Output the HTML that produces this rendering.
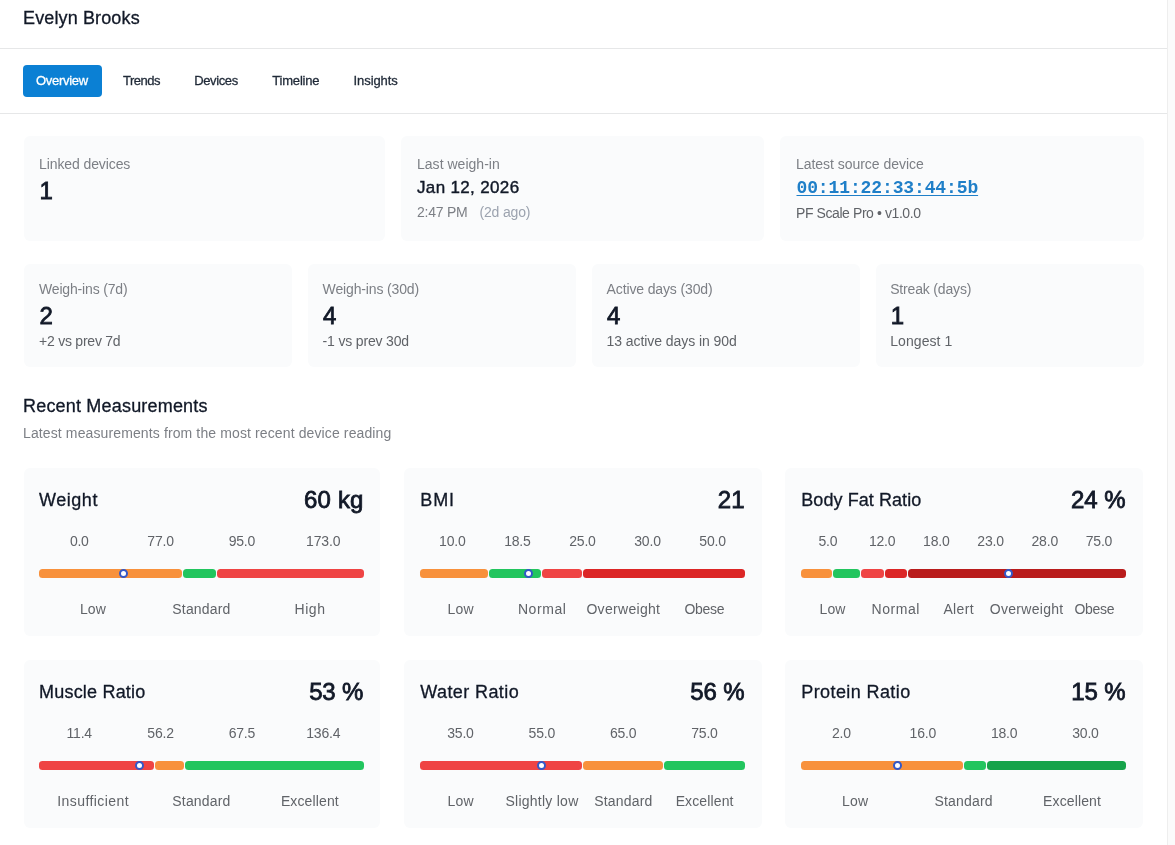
<!DOCTYPE html>
<html><head><meta charset="utf-8"><style>
html,body{margin:0;padding:0;background:#fff;}
body{width:1175px;height:845px;position:relative;overflow:hidden;font-family:"Liberation Sans", sans-serif;}
.t{position:absolute;line-height:1;white-space:nowrap;}
body>div.wrap{position:absolute;left:0;top:0;width:1175px;height:845px;will-change:transform;}
.r{position:absolute;}
</style></head><body>
<div class="wrap">
<div class="r" style="left:1167.00px;top:0.00px;width:1.00px;height:845.00px;background:#eeeeee;"></div>
<div class="r" style="left:1168.00px;top:0.00px;width:7.00px;height:845.00px;background:#fbfbfb;"></div>
<div class="t" style="top:8.66px;font-size:18px;color:#111827;font-weight:400;font-family:'Liberation Sans', sans-serif;letter-spacing:0.133px;-webkit-text-stroke:0.3px #111827;left:23.00px;">Evelyn Brooks</div>
<div class="r" style="left:0.00px;top:48.00px;width:1167.00px;height:1.00px;background:#e6e7e8;"></div>
<div class="r" style="left:23.00px;top:65.00px;width:79.00px;height:32.00px;background:#0b80d4;border-radius:4px;"></div>
<div class="t" style="top:73.50px;font-size:13px;color:#ffffff;font-weight:400;font-family:'Liberation Sans', sans-serif;letter-spacing:-0.286px;-webkit-text-stroke:0.3px #ffffff;left:-138.14px;width:400px;text-align:center;">Overview</div>
<div class="t" style="top:73.50px;font-size:13px;color:#1f2937;font-weight:400;font-family:'Liberation Sans', sans-serif;letter-spacing:-0.52px;-webkit-text-stroke:0.3px #1f2937;left:-58.46px;width:400px;text-align:center;">Trends</div>
<div class="t" style="top:73.50px;font-size:13px;color:#1f2937;font-weight:400;font-family:'Liberation Sans', sans-serif;letter-spacing:-0.383px;-webkit-text-stroke:0.3px #1f2937;left:16.01px;width:400px;text-align:center;">Devices</div>
<div class="t" style="top:73.50px;font-size:13px;color:#1f2937;font-weight:400;font-family:'Liberation Sans', sans-serif;letter-spacing:-0.171px;-webkit-text-stroke:0.3px #1f2937;left:95.81px;width:400px;text-align:center;">Timeline</div>
<div class="t" style="top:73.50px;font-size:13px;color:#1f2937;font-weight:400;font-family:'Liberation Sans', sans-serif;letter-spacing:-0.086px;-webkit-text-stroke:0.3px #1f2937;left:175.66px;width:400px;text-align:center;">Insights</div>
<div class="r" style="left:0.00px;top:113.00px;width:1167.00px;height:1.00px;background:#e6e7e8;"></div>
<div class="r" style="left:24.00px;top:136.00px;width:361.00px;height:105.00px;background:#fafbfc;border-radius:6px;"></div>
<div class="r" style="left:401.00px;top:136.00px;width:363.00px;height:105.00px;background:#fafbfc;border-radius:6px;"></div>
<div class="r" style="left:780.00px;top:136.00px;width:364.00px;height:105.00px;background:#fafbfc;border-radius:6px;"></div>
<div class="t" style="top:157.05px;font-size:14px;color:#7c7f85;font-weight:400;font-family:'Liberation Sans', sans-serif;letter-spacing:-0.1px;left:39.00px;">Linked devices</div>
<div class="t" style="top:178.68px;font-size:24px;color:#111827;font-weight:400;font-family:'Liberation Sans', sans-serif;-webkit-text-stroke:0.8px #111827;left:39.50px;">1</div>
<div class="t" style="top:156.75px;font-size:14px;color:#7c7f85;font-weight:400;font-family:'Liberation Sans', sans-serif;letter-spacing:0.025px;left:417.00px;">Last weigh-in</div>
<div class="t" style="top:179.21px;font-size:17px;color:#111827;font-weight:400;font-family:'Liberation Sans', sans-serif;letter-spacing:0.345px;-webkit-text-stroke:0.4px #111827;left:417.00px;">Jan 12, 2026</div>
<div class="t" style="top:205.05px;font-size:14px;color:#7c7f85;font-weight:400;font-family:'Liberation Sans', sans-serif;letter-spacing:-0.233px;left:417.00px;">2:47 PM</div>
<div class="t" style="top:205.05px;font-size:14px;color:#9ca3af;font-weight:400;font-family:'Liberation Sans', sans-serif;letter-spacing:-0.171px;left:479.50px;">(2d ago)</div>
<div class="t" style="top:156.85px;font-size:14px;color:#7c7f85;font-weight:400;font-family:'Liberation Sans', sans-serif;letter-spacing:-0.037px;left:796.00px;">Latest source device</div>
<div class="t" style="top:179.36px;font-size:18px;color:#1f7fc8;font-weight:700;font-family:'Liberation Mono', monospace;letter-spacing:-0.12px;left:796.50px;text-decoration:underline;text-underline-offset:2px;">00:11:22:33:44:5b</div>
<div class="t" style="top:206.15px;font-size:14px;color:#606368;font-weight:400;font-family:'Liberation Sans', sans-serif;letter-spacing:-0.415px;left:796.00px;">PF Scale Pro • v1.0.0</div>
<div class="r" style="left:24.00px;top:264.00px;width:268.00px;height:103.00px;background:#fafbfc;border-radius:6px;"></div>
<div class="t" style="top:282.05px;font-size:14px;color:#7c7f85;font-weight:400;font-family:'Liberation Sans', sans-serif;letter-spacing:-0.169px;left:39.00px;">Weigh-ins (7d)</div>
<div class="t" style="top:304.28px;font-size:24px;color:#111827;font-weight:400;font-family:'Liberation Sans', sans-serif;-webkit-text-stroke:0.8px #111827;left:39.50px;">2</div>
<div class="t" style="top:333.65px;font-size:14px;color:#606368;font-weight:400;font-family:'Liberation Sans', sans-serif;letter-spacing:-0.233px;left:39.00px;">+2 vs prev 7d</div>
<div class="r" style="left:308.00px;top:264.00px;width:268.00px;height:103.00px;background:#fafbfc;border-radius:6px;"></div>
<div class="t" style="top:282.05px;font-size:14px;color:#7c7f85;font-weight:400;font-family:'Liberation Sans', sans-serif;letter-spacing:-0.143px;left:322.60px;">Weigh-ins (30d)</div>
<div class="t" style="top:304.28px;font-size:24px;color:#111827;font-weight:400;font-family:'Liberation Sans', sans-serif;-webkit-text-stroke:0.8px #111827;left:323.10px;">4</div>
<div class="t" style="top:333.65px;font-size:14px;color:#606368;font-weight:400;font-family:'Liberation Sans', sans-serif;letter-spacing:-0.169px;left:322.60px;">-1 vs prev 30d</div>
<div class="r" style="left:592.00px;top:264.00px;width:268.00px;height:103.00px;background:#fafbfc;border-radius:6px;"></div>
<div class="t" style="top:282.05px;font-size:14px;color:#7c7f85;font-weight:400;font-family:'Liberation Sans', sans-serif;letter-spacing:-0.131px;left:606.60px;">Active days (30d)</div>
<div class="t" style="top:304.28px;font-size:24px;color:#111827;font-weight:400;font-family:'Liberation Sans', sans-serif;-webkit-text-stroke:0.8px #111827;left:607.10px;">4</div>
<div class="t" style="top:333.65px;font-size:14px;color:#606368;font-weight:400;font-family:'Liberation Sans', sans-serif;letter-spacing:-0.07px;left:606.60px;">13 active days in 90d</div>
<div class="r" style="left:876.00px;top:264.00px;width:268.00px;height:103.00px;background:#fafbfc;border-radius:6px;"></div>
<div class="t" style="top:282.05px;font-size:14px;color:#7c7f85;font-weight:400;font-family:'Liberation Sans', sans-serif;letter-spacing:-0.167px;left:890.20px;">Streak (days)</div>
<div class="t" style="top:304.28px;font-size:24px;color:#111827;font-weight:400;font-family:'Liberation Sans', sans-serif;-webkit-text-stroke:0.8px #111827;left:890.70px;">1</div>
<div class="t" style="top:333.65px;font-size:14px;color:#606368;font-weight:400;font-family:'Liberation Sans', sans-serif;letter-spacing:0.075px;left:890.20px;">Longest 1</div>
<div class="t" style="top:396.76px;font-size:18px;color:#111827;font-weight:400;font-family:'Liberation Sans', sans-serif;letter-spacing:0.189px;-webkit-text-stroke:0.3px #111827;left:23.00px;">Recent Measurements</div>
<div class="t" style="top:426.15px;font-size:14px;color:#7c7f85;font-weight:400;font-family:'Liberation Sans', sans-serif;letter-spacing:0.119px;left:23.00px;">Latest measurements from the most recent device reading</div>
<div class="r" style="left:24.00px;top:468.00px;width:356.00px;height:168.00px;background:#fafbfc;border-radius:6px;"></div>
<div class="t" style="top:491.26px;font-size:18px;color:#111827;font-weight:400;font-family:'Liberation Sans', sans-serif;letter-spacing:0.52px;-webkit-text-stroke:0.3px #111827;left:39.10px;">Weight</div>
<div class="t" style="top:487.58px;font-size:24px;color:#111827;font-weight:400;font-family:'Liberation Sans', sans-serif;letter-spacing:0.15px;-webkit-text-stroke:0.8px #111827;right:811.45px;">60 kg</div>
<div class="t" style="top:533.95px;font-size:14px;color:#606368;font-weight:400;font-family:'Liberation Sans', sans-serif;letter-spacing:-0.35px;left:-120.81px;width:400px;text-align:center;">0.0</div>
<div class="t" style="top:533.95px;font-size:14px;color:#606368;font-weight:400;font-family:'Liberation Sans', sans-serif;letter-spacing:-0.2px;left:-39.41px;width:400px;text-align:center;">77.0</div>
<div class="t" style="top:533.95px;font-size:14px;color:#606368;font-weight:400;font-family:'Liberation Sans', sans-serif;letter-spacing:-0.2px;left:41.91px;width:400px;text-align:center;">95.0</div>
<div class="t" style="top:533.95px;font-size:14px;color:#606368;font-weight:400;font-family:'Liberation Sans', sans-serif;letter-spacing:-0.1px;left:123.29px;width:400px;text-align:center;">173.0</div>
<div class="r" style="left:38.70px;top:569.20px;width:143.79px;height:8.50px;background:#f8913c;border-radius:3.5px;"></div>
<div class="r" style="left:183.49px;top:569.20px;width:32.85px;height:8.50px;background:#22c55e;border-radius:3.5px;"></div>
<div class="r" style="left:217.33px;top:569.20px;width:146.67px;height:8.50px;background:#ef4444;border-radius:3.5px;"></div>
<div class="r" style="left:118.90px;top:569.00px;width:5px;height:5px;border:2px solid #3358c8;border-radius:50%;background:#fff;"></div>
<div class="t" style="top:601.85px;font-size:14px;color:#606368;font-weight:400;font-family:'Liberation Sans', sans-serif;letter-spacing:0.15px;left:-107.01px;width:400px;text-align:center;">Low</div>
<div class="t" style="top:601.85px;font-size:14px;color:#606368;font-weight:400;font-family:'Liberation Sans', sans-serif;letter-spacing:0.186px;left:1.44px;width:400px;text-align:center;">Standard</div>
<div class="t" style="top:601.85px;font-size:14px;color:#606368;font-weight:400;font-family:'Liberation Sans', sans-serif;letter-spacing:0.533px;left:110.05px;width:400px;text-align:center;">High</div>
<div class="r" style="left:404.00px;top:468.00px;width:358.00px;height:168.00px;background:#fafbfc;border-radius:6px;"></div>
<div class="t" style="top:491.26px;font-size:18px;color:#111827;font-weight:400;font-family:'Liberation Sans', sans-serif;letter-spacing:0.85px;-webkit-text-stroke:0.3px #111827;left:420.30px;">BMI</div>
<div class="t" style="top:487.58px;font-size:24px;color:#111827;font-weight:400;font-family:'Liberation Sans', sans-serif;letter-spacing:0.2px;-webkit-text-stroke:0.8px #111827;right:430.20px;">21</div>
<div class="t" style="top:533.95px;font-size:14px;color:#606368;font-weight:400;font-family:'Liberation Sans', sans-serif;letter-spacing:-0.2px;left:252.33px;width:400px;text-align:center;">10.0</div>
<div class="t" style="top:533.95px;font-size:14px;color:#606368;font-weight:400;font-family:'Liberation Sans', sans-serif;letter-spacing:-0.2px;left:317.39px;width:400px;text-align:center;">18.5</div>
<div class="t" style="top:533.95px;font-size:14px;color:#606368;font-weight:400;font-family:'Liberation Sans', sans-serif;letter-spacing:-0.2px;left:382.45px;width:400px;text-align:center;">25.0</div>
<div class="t" style="top:533.95px;font-size:14px;color:#606368;font-weight:400;font-family:'Liberation Sans', sans-serif;letter-spacing:-0.2px;left:447.51px;width:400px;text-align:center;">30.0</div>
<div class="t" style="top:533.95px;font-size:14px;color:#606368;font-weight:400;font-family:'Liberation Sans', sans-serif;letter-spacing:-0.2px;left:512.57px;width:400px;text-align:center;">50.0</div>
<div class="r" style="left:419.90px;top:569.20px;width:68.13px;height:8.50px;background:#f8913c;border-radius:3.5px;"></div>
<div class="r" style="left:489.03px;top:569.20px;width:51.86px;height:8.50px;background:#22c55e;border-radius:3.5px;"></div>
<div class="r" style="left:541.89px;top:569.20px;width:39.66px;height:8.50px;background:#ef4444;border-radius:3.5px;"></div>
<div class="r" style="left:582.55px;top:569.20px;width:162.65px;height:8.50px;background:#dc2626;border-radius:3.5px;"></div>
<div class="r" style="left:524.00px;top:569.00px;width:5px;height:5px;border:2px solid #3358c8;border-radius:50%;background:#fff;"></div>
<div class="t" style="top:601.85px;font-size:14px;color:#606368;font-weight:400;font-family:'Liberation Sans', sans-serif;letter-spacing:0.15px;left:260.64px;width:400px;text-align:center;">Low</div>
<div class="t" style="top:601.85px;font-size:14px;color:#606368;font-weight:400;font-family:'Liberation Sans', sans-serif;letter-spacing:0.57px;left:342.17px;width:400px;text-align:center;">Normal</div>
<div class="t" style="top:601.85px;font-size:14px;color:#606368;font-weight:400;font-family:'Liberation Sans', sans-serif;letter-spacing:0.306px;left:423.37px;width:400px;text-align:center;">Overweight</div>
<div class="t" style="top:601.85px;font-size:14px;color:#606368;font-weight:400;font-family:'Liberation Sans', sans-serif;letter-spacing:-0.325px;left:504.37px;width:400px;text-align:center;">Obese</div>
<div class="r" style="left:785.00px;top:468.00px;width:358.00px;height:168.00px;background:#fafbfc;border-radius:6px;"></div>
<div class="t" style="top:491.26px;font-size:18px;color:#111827;font-weight:400;font-family:'Liberation Sans', sans-serif;letter-spacing:0.069px;-webkit-text-stroke:0.3px #111827;left:801.30px;">Body Fat Ratio</div>
<div class="t" style="top:487.58px;font-size:24px;color:#111827;font-weight:400;font-family:'Liberation Sans', sans-serif;-webkit-text-stroke:0.8px #111827;right:49.40px;">24 %</div>
<div class="t" style="top:533.95px;font-size:14px;color:#606368;font-weight:400;font-family:'Liberation Sans', sans-serif;letter-spacing:-0.2px;left:627.91px;width:400px;text-align:center;">5.0</div>
<div class="t" style="top:533.95px;font-size:14px;color:#606368;font-weight:400;font-family:'Liberation Sans', sans-serif;letter-spacing:-0.2px;left:682.12px;width:400px;text-align:center;">12.0</div>
<div class="t" style="top:533.95px;font-size:14px;color:#606368;font-weight:400;font-family:'Liberation Sans', sans-serif;letter-spacing:-0.2px;left:736.34px;width:400px;text-align:center;">18.0</div>
<div class="t" style="top:533.95px;font-size:14px;color:#606368;font-weight:400;font-family:'Liberation Sans', sans-serif;letter-spacing:-0.2px;left:790.56px;width:400px;text-align:center;">23.0</div>
<div class="t" style="top:533.95px;font-size:14px;color:#606368;font-weight:400;font-family:'Liberation Sans', sans-serif;letter-spacing:-0.2px;left:844.78px;width:400px;text-align:center;">28.0</div>
<div class="t" style="top:533.95px;font-size:14px;color:#606368;font-weight:400;font-family:'Liberation Sans', sans-serif;letter-spacing:-0.2px;left:898.99px;width:400px;text-align:center;">75.0</div>
<div class="r" style="left:800.90px;top:569.20px;width:31.53px;height:8.50px;background:#f8913c;border-radius:3.5px;"></div>
<div class="r" style="left:833.43px;top:569.20px;width:26.88px;height:8.50px;background:#22c55e;border-radius:3.5px;"></div>
<div class="r" style="left:861.31px;top:569.20px;width:22.24px;height:8.50px;background:#ef4444;border-radius:3.5px;"></div>
<div class="r" style="left:884.55px;top:569.20px;width:22.24px;height:8.50px;background:#dc2626;border-radius:3.5px;"></div>
<div class="r" style="left:907.78px;top:569.20px;width:218.42px;height:8.50px;background:#b91c1c;border-radius:3.5px;"></div>
<div class="r" style="left:1004.10px;top:569.00px;width:5px;height:5px;border:2px solid #3358c8;border-radius:50%;background:#fff;"></div>
<div class="t" style="top:601.85px;font-size:14px;color:#606368;font-weight:400;font-family:'Liberation Sans', sans-serif;letter-spacing:0.15px;left:632.58px;width:400px;text-align:center;">Low</div>
<div class="t" style="top:601.85px;font-size:14px;color:#606368;font-weight:400;font-family:'Liberation Sans', sans-serif;letter-spacing:0.57px;left:695.78px;width:400px;text-align:center;">Normal</div>
<div class="t" style="top:601.85px;font-size:14px;color:#606368;font-weight:400;font-family:'Liberation Sans', sans-serif;letter-spacing:0.325px;left:758.66px;width:400px;text-align:center;">Alert</div>
<div class="t" style="top:601.85px;font-size:14px;color:#606368;font-weight:400;font-family:'Liberation Sans', sans-serif;letter-spacing:0.306px;left:826.65px;width:400px;text-align:center;">Overweight</div>
<div class="t" style="top:601.85px;font-size:14px;color:#606368;font-weight:400;font-family:'Liberation Sans', sans-serif;letter-spacing:-0.325px;left:894.34px;width:400px;text-align:center;">Obese</div>
<div class="r" style="left:24.00px;top:660.00px;width:356.00px;height:168.00px;background:#fafbfc;border-radius:6px;"></div>
<div class="t" style="top:683.26px;font-size:18px;color:#111827;font-weight:400;font-family:'Liberation Sans', sans-serif;letter-spacing:0.191px;-webkit-text-stroke:0.3px #111827;left:39.10px;">Muscle Ratio</div>
<div class="t" style="top:679.58px;font-size:24px;color:#111827;font-weight:400;font-family:'Liberation Sans', sans-serif;letter-spacing:-0.15px;-webkit-text-stroke:0.8px #111827;right:811.75px;">53 %</div>
<div class="t" style="top:725.95px;font-size:14px;color:#606368;font-weight:400;font-family:'Liberation Sans', sans-serif;letter-spacing:-0.2px;left:-120.74px;width:400px;text-align:center;">11.4</div>
<div class="t" style="top:725.95px;font-size:14px;color:#606368;font-weight:400;font-family:'Liberation Sans', sans-serif;letter-spacing:-0.2px;left:-39.41px;width:400px;text-align:center;">56.2</div>
<div class="t" style="top:725.95px;font-size:14px;color:#606368;font-weight:400;font-family:'Liberation Sans', sans-serif;letter-spacing:-0.2px;left:41.91px;width:400px;text-align:center;">67.5</div>
<div class="t" style="top:725.95px;font-size:14px;color:#606368;font-weight:400;font-family:'Liberation Sans', sans-serif;letter-spacing:-0.2px;left:123.24px;width:400px;text-align:center;">136.4</div>
<div class="r" style="left:38.70px;top:761.20px;width:115.59px;height:8.50px;background:#ef4444;border-radius:3.5px;"></div>
<div class="r" style="left:155.29px;top:761.20px;width:28.41px;height:8.50px;background:#f8913c;border-radius:3.5px;"></div>
<div class="r" style="left:184.69px;top:761.20px;width:179.31px;height:8.50px;background:#22c55e;border-radius:3.5px;"></div>
<div class="r" style="left:135.20px;top:761.00px;width:5px;height:5px;border:2px solid #3358c8;border-radius:50%;background:#fff;"></div>
<div class="t" style="top:793.85px;font-size:14px;color:#606368;font-weight:400;font-family:'Liberation Sans', sans-serif;letter-spacing:0.436px;left:-106.87px;width:400px;text-align:center;">Insufficient</div>
<div class="t" style="top:793.85px;font-size:14px;color:#606368;font-weight:400;font-family:'Liberation Sans', sans-serif;letter-spacing:0.186px;left:1.44px;width:400px;text-align:center;">Standard</div>
<div class="t" style="top:793.85px;font-size:14px;color:#606368;font-weight:400;font-family:'Liberation Sans', sans-serif;letter-spacing:0.125px;left:109.85px;width:400px;text-align:center;">Excellent</div>
<div class="r" style="left:404.00px;top:660.00px;width:358.00px;height:168.00px;background:#fafbfc;border-radius:6px;"></div>
<div class="t" style="top:683.26px;font-size:18px;color:#111827;font-weight:400;font-family:'Liberation Sans', sans-serif;letter-spacing:0.4px;-webkit-text-stroke:0.3px #111827;left:420.30px;">Water Ratio</div>
<div class="t" style="top:679.58px;font-size:24px;color:#111827;font-weight:400;font-family:'Liberation Sans', sans-serif;letter-spacing:-0.15px;-webkit-text-stroke:0.8px #111827;right:430.55px;">56 %</div>
<div class="t" style="top:725.95px;font-size:14px;color:#606368;font-weight:400;font-family:'Liberation Sans', sans-serif;letter-spacing:-0.2px;left:260.46px;width:400px;text-align:center;">35.0</div>
<div class="t" style="top:725.95px;font-size:14px;color:#606368;font-weight:400;font-family:'Liberation Sans', sans-serif;letter-spacing:-0.2px;left:341.79px;width:400px;text-align:center;">55.0</div>
<div class="t" style="top:725.95px;font-size:14px;color:#606368;font-weight:400;font-family:'Liberation Sans', sans-serif;letter-spacing:-0.2px;left:423.11px;width:400px;text-align:center;">65.0</div>
<div class="t" style="top:725.95px;font-size:14px;color:#606368;font-weight:400;font-family:'Liberation Sans', sans-serif;letter-spacing:-0.2px;left:504.44px;width:400px;text-align:center;">75.0</div>
<div class="r" style="left:419.90px;top:761.20px;width:161.65px;height:8.50px;background:#ef4444;border-radius:3.5px;"></div>
<div class="r" style="left:582.55px;top:761.20px;width:80.33px;height:8.50px;background:#f8913c;border-radius:3.5px;"></div>
<div class="r" style="left:663.88px;top:761.20px;width:81.33px;height:8.50px;background:#22c55e;border-radius:3.5px;"></div>
<div class="r" style="left:536.50px;top:761.00px;width:5px;height:5px;border:2px solid #3358c8;border-radius:50%;background:#fff;"></div>
<div class="t" style="top:793.85px;font-size:14px;color:#606368;font-weight:400;font-family:'Liberation Sans', sans-serif;letter-spacing:0.15px;left:260.64px;width:400px;text-align:center;">Low</div>
<div class="t" style="top:793.85px;font-size:14px;color:#606368;font-weight:400;font-family:'Liberation Sans', sans-serif;letter-spacing:0.245px;left:342.01px;width:400px;text-align:center;">Slightly low</div>
<div class="t" style="top:793.85px;font-size:14px;color:#606368;font-weight:400;font-family:'Liberation Sans', sans-serif;letter-spacing:0.186px;left:423.31px;width:400px;text-align:center;">Standard</div>
<div class="t" style="top:793.85px;font-size:14px;color:#606368;font-weight:400;font-family:'Liberation Sans', sans-serif;letter-spacing:0.125px;left:504.60px;width:400px;text-align:center;">Excellent</div>
<div class="r" style="left:785.00px;top:660.00px;width:358.00px;height:168.00px;background:#fafbfc;border-radius:6px;"></div>
<div class="t" style="top:683.26px;font-size:18px;color:#111827;font-weight:400;font-family:'Liberation Sans', sans-serif;letter-spacing:0.4px;-webkit-text-stroke:0.3px #111827;left:801.30px;">Protein Ratio</div>
<div class="t" style="top:679.58px;font-size:24px;color:#111827;font-weight:400;font-family:'Liberation Sans', sans-serif;letter-spacing:-0.15px;-webkit-text-stroke:0.8px #111827;right:49.55px;">15 %</div>
<div class="t" style="top:725.95px;font-size:14px;color:#606368;font-weight:400;font-family:'Liberation Sans', sans-serif;letter-spacing:-0.2px;left:641.46px;width:400px;text-align:center;">2.0</div>
<div class="t" style="top:725.95px;font-size:14px;color:#606368;font-weight:400;font-family:'Liberation Sans', sans-serif;letter-spacing:-0.2px;left:722.79px;width:400px;text-align:center;">16.0</div>
<div class="t" style="top:725.95px;font-size:14px;color:#606368;font-weight:400;font-family:'Liberation Sans', sans-serif;letter-spacing:-0.2px;left:804.11px;width:400px;text-align:center;">18.0</div>
<div class="t" style="top:725.95px;font-size:14px;color:#606368;font-weight:400;font-family:'Liberation Sans', sans-serif;letter-spacing:-0.2px;left:885.44px;width:400px;text-align:center;">30.0</div>
<div class="r" style="left:800.90px;top:761.20px;width:161.65px;height:8.50px;background:#f8913c;border-radius:3.5px;"></div>
<div class="r" style="left:963.55px;top:761.20px;width:22.24px;height:8.50px;background:#22c55e;border-radius:3.5px;"></div>
<div class="r" style="left:986.79px;top:761.20px;width:139.41px;height:8.50px;background:#16a34a;border-radius:3.5px;"></div>
<div class="r" style="left:893.20px;top:761.00px;width:5px;height:5px;border:2px solid #3358c8;border-radius:50%;background:#fff;"></div>
<div class="t" style="top:793.85px;font-size:14px;color:#606368;font-weight:400;font-family:'Liberation Sans', sans-serif;letter-spacing:0.15px;left:655.19px;width:400px;text-align:center;">Low</div>
<div class="t" style="top:793.85px;font-size:14px;color:#606368;font-weight:400;font-family:'Liberation Sans', sans-serif;letter-spacing:0.186px;left:763.64px;width:400px;text-align:center;">Standard</div>
<div class="t" style="top:793.85px;font-size:14px;color:#606368;font-weight:400;font-family:'Liberation Sans', sans-serif;letter-spacing:0.125px;left:872.05px;width:400px;text-align:center;">Excellent</div>
</div></body></html>
